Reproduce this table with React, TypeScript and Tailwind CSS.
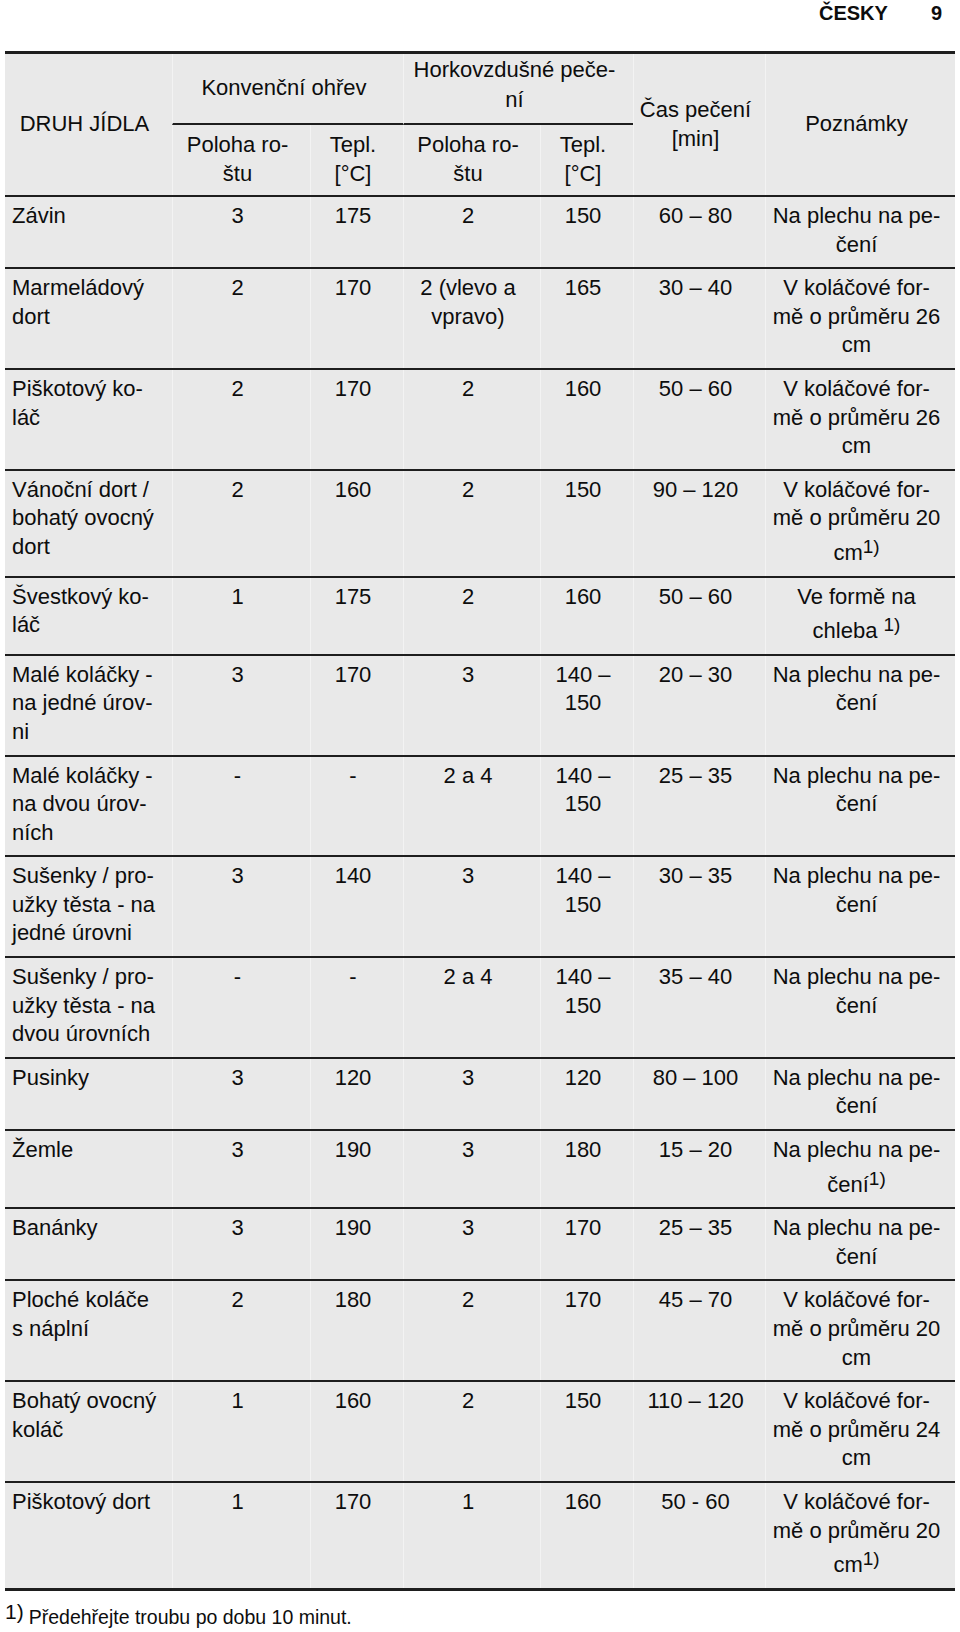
import React from "react";

type Row = {
  name: string[];
  c1: string[];
  c2: string[];
  c3: string[];
  c4: string[];
  time: string;
  note: string[];
  sup?: "tight" | "space";
};

const rows: Row[] = [
  { name: ["Závin"], c1: ["3"], c2: ["175"], c3: ["2"], c4: ["150"], time: "60 – 80", note: ["Na plechu na pe-", "čení"] },
  { name: ["Marmeládový", "dort"], c1: ["2"], c2: ["170"], c3: ["2 (vlevo a", "vpravo)"], c4: ["165"], time: "30 – 40", note: ["V koláčové for-", "mě o průměru 26", "cm"] },
  { name: ["Piškotový ko-", "láč"], c1: ["2"], c2: ["170"], c3: ["2"], c4: ["160"], time: "50 – 60", note: ["V koláčové for-", "mě o průměru 26", "cm"] },
  { name: ["Vánoční dort /", "bohatý ovocný", "dort"], c1: ["2"], c2: ["160"], c3: ["2"], c4: ["150"], time: "90 – 120", note: ["V koláčové for-", "mě o průměru 20", "cm"], sup: "tight" },
  { name: ["Švestkový ko-", "láč"], c1: ["1"], c2: ["175"], c3: ["2"], c4: ["160"], time: "50 – 60", note: ["Ve formě na", "chleba"], sup: "space" },
  { name: ["Malé koláčky -", "na jedné úrov-", "ni"], c1: ["3"], c2: ["170"], c3: ["3"], c4: ["140 –", "150"], time: "20 – 30", note: ["Na plechu na pe-", "čení"] },
  { name: ["Malé koláčky -", "na dvou úrov-", "ních"], c1: ["-"], c2: ["-"], c3: ["2 a 4"], c4: ["140 –", "150"], time: "25 – 35", note: ["Na plechu na pe-", "čení"] },
  { name: ["Sušenky / pro-", "užky těsta - na", "jedné úrovni"], c1: ["3"], c2: ["140"], c3: ["3"], c4: ["140 –", "150"], time: "30 – 35", note: ["Na plechu na pe-", "čení"] },
  { name: ["Sušenky / pro-", "užky těsta - na", "dvou úrovních"], c1: ["-"], c2: ["-"], c3: ["2 a 4"], c4: ["140 –", "150"], time: "35 – 40", note: ["Na plechu na pe-", "čení"] },
  { name: ["Pusinky"], c1: ["3"], c2: ["120"], c3: ["3"], c4: ["120"], time: "80 – 100", note: ["Na plechu na pe-", "čení"] },
  { name: ["Žemle"], c1: ["3"], c2: ["190"], c3: ["3"], c4: ["180"], time: "15 – 20", note: ["Na plechu na pe-", "čení"], sup: "tight" },
  { name: ["Banánky"], c1: ["3"], c2: ["190"], c3: ["3"], c4: ["170"], time: "25 – 35", note: ["Na plechu na pe-", "čení"] },
  { name: ["Ploché koláče", "s náplní"], c1: ["2"], c2: ["180"], c3: ["2"], c4: ["170"], time: "45 – 70", note: ["V koláčové for-", "mě o průměru 20", "cm"] },
  { name: ["Bohatý ovocný", "koláč"], c1: ["1"], c2: ["160"], c3: ["2"], c4: ["150"], time: "110 – 120", note: ["V koláčové for-", "mě o průměru 24", "cm"] },
  { name: ["Piškotový dort"], c1: ["1"], c2: ["170"], c3: ["1"], c4: ["160"], time: "50 - 60", note: ["V koláčové for-", "mě o průměru 20", "cm"], sup: "tight" },
];

const cols = "grid grid-cols-[167px_138px_93px_137px_93px_132px_190px]";
const center = "pl-[2px] pr-[10px] text-center border-l border-[#f3f3f3]";

const Lines = ({ lines }: { lines: string[] }) => (
  <>
    {lines.map((l, i) => (
      <div key={i} className="whitespace-nowrap">
        {l}
      </div>
    ))}
  </>
);

const Sup = () => <span className="align-[7px] text-[19px]">1)</span>;

const BodyRow = ({ r }: { r: Row }) => {
  const last = r.note.length - 1;
  return (
    <div className={`${cols} border-b-2 border-[#1e1e1e]`}>
      <div className="pl-[7px] pr-1 pt-[5px] pb-[8px]">
        <Lines lines={r.name} />
      </div>
      <div className={`${center} pt-[5px]`}>
        <Lines lines={r.c1} />
      </div>
      <div className={`${center} pt-[5px]`}>
        <Lines lines={r.c2} />
      </div>
      <div className={`${center} pt-[5px]`}>
        <Lines lines={r.c3} />
      </div>
      <div className={`${center} pt-[5px]`}>
        <Lines lines={r.c4} />
      </div>
      <div className={`${center} pt-[5px] whitespace-nowrap`}>{r.time}</div>
      <div className={`${center} pt-[5px] pb-[8px]`}>
        {r.note.map((l, i) => (
          <div key={i} className="whitespace-nowrap">
            {l}
            {i === last && r.sup === "tight" && <Sup />}
            {i === last && r.sup === "space" && (
              <>
                {" "}
                <Sup />
              </>
            )}
          </div>
        ))}
      </div>
    </div>
  );
};

export default function App() {
  return (
    <div className="w-[960px] h-[1632px] bg-white text-[#0d0d0d] font-['Liberation_Sans',Arial,sans-serif]">
      <div className="h-[51px] flex justify-end pt-[3px] pr-[18px] text-[20px] leading-[20px] font-bold">
        <span>ČESKY</span>
        <span className="ml-[43px]">9</span>
      </div>

      <div className="ml-[5px] w-[950px] bg-[#e9e9e9] text-[22px] leading-[28.6px] border-t-[3px] border-b-[1px] border-[#1e1e1e]">
        {/* header */}
        <div className={`${cols} grid-rows-[71px_70px] border-b-2 border-[#1e1e1e]`}>
          <div className="row-span-2 flex flex-col justify-center pl-[2px] pr-[10px] text-center">
            DRUH JÍDLA
          </div>
          <div className="col-span-2 border-b-2 border-[#1e1e1e] flex flex-col justify-center pl-[2px] pr-[10px] text-center border-l border-l-[#f3f3f3]">
            Konvenční ohřev
          </div>
          <div className="col-span-2 border-b-2 border-[#1e1e1e] flex flex-col justify-center pl-[2px] pr-[10px] text-center leading-[30px] pb-[7px] border-l border-l-[#f3f3f3]">
            <div>Horkovzdušné peče-</div>
            <div>ní</div>
          </div>
          <div className={`row-span-2 flex flex-col justify-center ${center}`}>
            <div>Čas pečení</div>
            <div>[min]</div>
          </div>
          <div className={`row-span-2 flex flex-col justify-center ${center}`}>
            Poznámky
          </div>
          <div className={`flex flex-col justify-center ${center}`}>
            <div>Poloha ro-</div>
            <div>štu</div>
          </div>
          <div className={`flex flex-col justify-center ${center}`}>
            <div>Tepl.</div>
            <div>[°C]</div>
          </div>
          <div className={`flex flex-col justify-center ${center}`}>
            <div>Poloha ro-</div>
            <div>štu</div>
          </div>
          <div className={`flex flex-col justify-center ${center}`}>
            <div>Tepl.</div>
            <div>[°C]</div>
          </div>
        </div>

        {rows.map((r, i) => (
          <BodyRow key={i} r={r} />
        ))}
      </div>

      <div className="mt-[9px] pl-[5px] text-[19.5px] leading-[24px] whitespace-nowrap">
        <span className="align-[5px] text-[21px] mr-[5px]">1)</span>
        Předehřejte troubu po dobu 10 minut.
      </div>
    </div>
  );
}
